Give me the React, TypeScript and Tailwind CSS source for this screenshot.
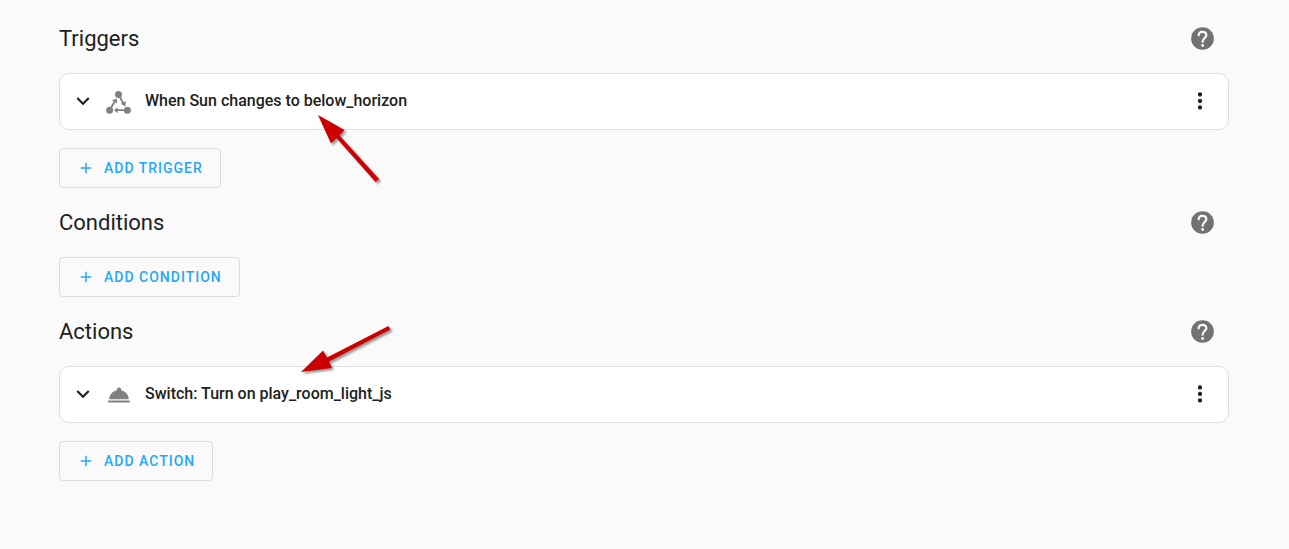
import type { ReactNode } from "react";

interface SectionProps {
  title: string;
  addLabel: string;
  children?: ReactNode;
}

interface RowProps {
  title: string;
  icon: ReactNode;
  children?: ReactNode;
}

const paths = {
  chevron: "M7.41,8.58L12,13.17L16.59,8.58L18,10L12,16L6,10L7.41,8.58Z",
  dots: "M12,16A2,2 0 0,1 14,18A2,2 0 0,1 12,20A2,2 0 0,1 10,18A2,2 0 0,1 12,16M12,10A2,2 0 0,1 14,12A2,2 0 0,1 12,14A2,2 0 0,1 10,12A2,2 0 0,1 12,10M12,4A2,2 0 0,1 14,6A2,2 0 0,1 12,8A2,2 0 0,1 10,6A2,2 0 0,1 12,4Z",
  bell: "M12,5A2,2 0 0,1 14,7C14,7.24 13.96,7.47 13.88,7.69C17.95,8.5 21,11.91 21,16H3C3,11.91 6.05,8.5 10.12,7.69C10.04,7.47 10,7.24 10,7A2,2 0 0,1 12,5M22,19H2V17H22V19Z",
  plus: "M19,13H13V19H11V13H5V11H11V5H13V11H19V13Z",
};

function Icon({ path, className }: { path: string; className: string }) {
  return (
    <svg viewBox="0 0 24 24" className={className} fill="currentColor" aria-hidden="true">
      <path d={path} />
    </svg>
  );
}

function HelpIcon() {
  return (
    <svg viewBox="0 0 24 24" className="size-[27px]" aria-hidden="true">
      <circle cx="12" cy="12" r="10.1" fill="currentColor" />
      <path
        d="M8.6 9.2C8.6 7.2 10 6 12 6S15.400 7.200 15.400 9.100C15.400 11.500 12.100 11.700 12.100 14.800"
        fill="none"
        stroke="#fafafa"
        strokeWidth="2"
        strokeLinecap="round"
      />
      <circle cx="12.1" cy="18.2" r="1.3" fill="#fafafa" />
    </svg>
  );
}

function StateIcon() {
  return (
    <svg viewBox="0 0 26 26" className="size-[26px]" fill="currentColor" aria-hidden="true">
      <circle cx="12.5" cy="5.6" r="3.5" />
      <circle cx="3.6" cy="21.2" r="3.5" />
      <circle cx="21.4" cy="21.2" r="3.5" />
      <path d="M3.6 21.2L9 12M12.5 5.600L17.800 15M21.400 21.200H10" stroke="currentColor" strokeWidth="1.8" />
      <path d="M10.6 9.400L11.300 14.400L6 11.500ZM19.300 17.600L14.600 14.700L20 12.300ZM8 21.200L11.600 18.200V24.200Z" />
    </svg>
  );
}

function Row({ title, icon, children }: RowProps) {
  return (
    <div className="relative mb-[18px] flex h-[57px] items-center rounded-[10px] border border-[#e0e0e0] bg-white pb-px pl-[10px] pr-[15px]">
      <button type="button" aria-label="Expand">
        <Icon path={paths.chevron} className="size-[26px]" />
      </button>
      <span className="ml-[10px] pt-[2px] text-[#808080]">{icon}</span>
      <h3 className="ml-[13px] flex-1 pb-px text-base font-medium">{title}</h3>
      <button type="button" aria-label="More options">
        <Icon path={paths.dots} className="size-[26px]" />
      </button>
      {children}
    </div>
  );
}

function Section({ title, addLabel, children }: SectionProps) {
  return (
    <section className="mb-[10px]">
      <div className="mb-[11px] flex h-12 items-center justify-between pr-[13px]">
        <h2 className="pt-[2px] text-[22px] leading-7">{title}</h2>
        <button type="button" aria-label={`Help for ${title}`} className="text-[#727272]">
          <HelpIcon />
        </button>
      </div>
      {children}
      <button
        type="button"
        className="flex h-10 items-center gap-[9px] rounded border border-[#dcdcdc] px-[17px] text-sm font-medium uppercase tracking-[1px] text-[#26a8f4]"
      >
        <Icon path={paths.plus} className="size-[18px]" />
        {addLabel}
      </button>
    </section>
  );
}

export default function App() {
  return (
    <main className="min-h-screen bg-[#fafafa] pl-[59px] pr-[60px] pt-[14px] font-['Roboto',sans-serif] text-[#212121]">
      <Section title="Triggers" addLabel="Add trigger">
        <Row title="When Sun changes to below_horizon" icon={<StateIcon />}>
          <svg
            viewBox="310 110 80 80"
            className="pointer-events-none absolute left-[250px] top-9 z-10 size-20 drop-shadow-[2px_2px_1px_rgba(0,0,0,0.4)]"
            aria-hidden="true"
          >
            <path d="M318 115L344.500 130L339.500 135.500L379 179L375.500 182L336.500 138L331 143.500Z" fill="#c00" />
          </svg>
        </Row>
      </Section>
      <Section title="Conditions" addLabel="Add condition" />
      <Section title="Actions" addLabel="Add action">
        <Row title="Switch: Turn on play_room_light_js" icon={<Icon path={paths.bell} className="size-[26px]" />}>
          <svg
            viewBox="295 320 105 60"
            className="pointer-events-none absolute -top-[47px] left-[235px] z-10 h-[60px] w-[105px] drop-shadow-[2px_2px_1px_rgba(0,0,0,0.4)]"
            aria-hidden="true"
          >
            <path d="M301 372L323 350.500L327 357.500L388.500 326L390.500 329.500L329 361.500L332 368Z" fill="#c00" />
          </svg>
        </Row>
      </Section>
    </main>
  );
}
